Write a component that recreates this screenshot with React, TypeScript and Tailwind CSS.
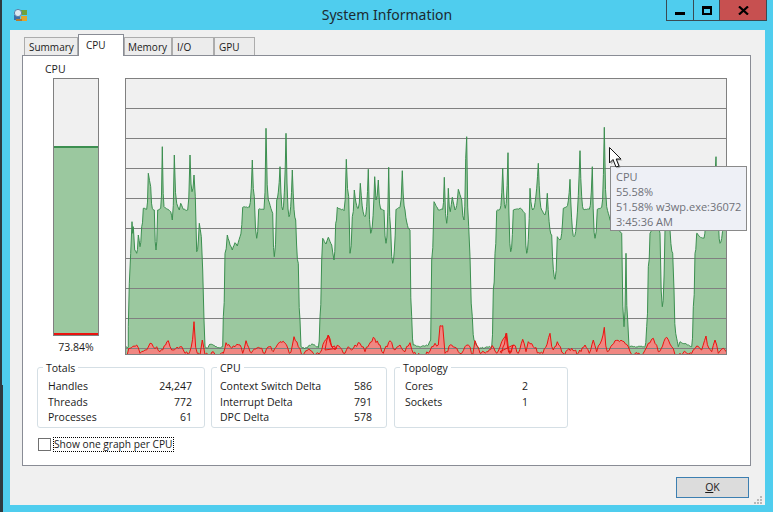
const FONT = "font-['Open_Sans',sans-serif]";

type Raw = number[];
type Pt = [number, number];

// traced from the picture in 3x coordinates, each run has its own x origin
const toPoints = (ox: number, raw: Raw): Pt[] => {
  const out: Pt[] = [];
  for (let i = 0; i < raw.length; i += 2) {
    out.push([ox + raw[i] / 3, 120 + raw[i + 1] / 3]);
  }
  return out;
};

// fill the traced runs back in with samples and a bit of wobble, steep runs get pinched towards the peak
const resample = (pts: Pt[], stepPx: number, amp: number, maxY: number): string => {
  const out: string[] = [];
  let n = 0;
  for (let i = 0; i < pts.length - 1; i++) {
    const [x0, y0] = pts[i];
    const [x1, y1] = pts[i + 1];
    out.push(`${x0.toFixed(1)},${y0.toFixed(1)}`);
    const steps = Math.floor((x1 - x0) / stepPx);
    for (let s = 1; s < steps; s++) {
      n += 1;
      const t = s / steps;
      const wobble = Math.sin(n * 12.9898) * 43758.5453;
      const noise = (wobble - Math.floor(wobble) - 0.5) * 2 * amp;
      const rising = y1 < y0;
      const eased = Math.abs(y1 - y0) > 15 ? (rising ? t ** 2.2 : 1 - (1 - t) ** 2.2) : t;
      const y = Math.min(maxY, y0 + (y1 - y0) * eased + noise);
      out.push(`${(x0 + (x1 - x0) * t).toFixed(1)},${y.toFixed(1)}`);
    }
  }
  const last = pts[pts.length - 1];
  out.push(`${last[0].toFixed(1)},${last[1].toFixed(1)}`);
  return out.join(' ');
};

const greenLine = resample(
  [
    ...toPoints(120, [
      18, 680, 25, 682, 25, 620, 28, 490, 32, 400, 36, 305, 38, 340, 40, 320, 44, 390, 50, 400, 55, 345, 60, 380, 65,
      320, 70, 265, 80, 268, 85, 160, 92, 200, 97, 265, 103, 270, 108, 390, 113, 270, 122, 265, 127, 80, 132, 260, 152,
      275, 157, 300, 163, 105, 170, 250, 178, 270, 182, 250, 190, 268, 203, 270, 210, 105, 216, 215, 222, 165, 226, 230,
      230, 395, 238, 310, 244, 350, 248, 450, 252, 600, 255, 680, 262, 685, 270, 672, 300, 685, 308, 680, 310, 590, 315,
      400, 322, 345, 330, 375, 337, 390, 345, 368, 352, 378, 360, 350, 368, 262, 388, 262, 397, 120, 403, 230, 410, 355,
      416, 268, 432, 268, 438, 25, 445, 240, 458, 280, 463, 410, 470, 240, 480, 140, 488, 270, 498, 40, 507, 290, 517,
      150, 527, 300, 535, 430, 540, 600, 543, 680, 555, 685, 578, 672, 595, 683, 600, 590,
    ]),
    ...toPoints(320, [
      5, 420, 8, 355, 18, 372, 25, 352, 35, 375, 42, 420, 47, 310, 52, 262, 72, 272, 79, 118, 86, 230, 90, 400, 97, 290,
      103, 210, 115, 265, 121, 190, 135, 290, 145, 148, 152, 340, 164, 170, 168, 240, 175, 180, 182, 268, 192, 270, 198,
      370, 206, 142, 212, 330, 218, 430, 228, 268, 240, 262, 247, 152, 255, 270, 270, 330, 275, 590, 280, 675, 300, 680,
      325, 675, 332, 660, 335, 420, 342, 245, 355, 270, 368, 268, 373, 172, 380, 310, 385, 205, 391, 275, 397, 232, 405,
      270, 415, 208, 425, 240, 432, 300, 437, 115, 440, 50, 446, 320, 450, 410, 457, 590, 462, 660, 475, 685, 515, 680,
      520, 510, 525, 400, 530, 272,
    ]),
    ...toPoints(500, [
      0, 268, 8, 145, 16, 265, 24, 98, 32, 395, 40, 270, 62, 265, 75, 280, 80, 400, 90, 205, 98, 270, 115, 130, 125,
      270, 135, 285, 142, 220, 155, 345, 165, 478, 172, 350, 180, 360, 190, 265, 200, 260, 210, 178, 222, 350, 240, 92,
      250, 268, 268, 268, 277, 140, 285, 355, 292, 268, 305, 262, 313, 22, 320, 260, 330, 300, 365, 340, 372, 620, 378,
      400, 383, 600, 387, 680, 435, 680, 440, 620, 445, 440, 450, 340, 470, 300, 480, 340, 487, 560, 495, 330, 510, 330,
      518, 400, 522, 510, 527, 640, 535, 680, 540, 665, 575, 680, 580, 560, 585, 400, 590, 340, 600, 350, 612, 355, 620,
      200, 635, 240, 648, 110, 655, 300, 660, 370, 670, 300, 680, 135,
    ]),
  ],
  0.8,
  0.6,
  354,
);

const redLine = resample(
  [
    ...toPoints(120, [
      18, 705, 30, 685, 50, 675, 60, 700, 75, 690, 90, 670, 100, 680, 110, 680, 120, 695, 145, 662, 155, 690, 175, 685,
      185, 680, 195, 700, 205, 704, 222, 605, 232, 700, 240, 705, 247, 660, 255, 705, 280, 695, 290, 705, 310, 700, 318,
      668, 335, 685, 345, 680, 360, 675, 368, 700, 378, 662, 390, 695, 420, 685, 435, 700, 448, 680, 460, 695, 480, 665,
      495, 670, 508, 700, 522, 650, 535, 680, 545, 705, 570, 690, 585, 705, 605, 690, 613, 665, 625, 645, 635, 680, 650,
      685,
    ]),
    ...toPoints(320, [
      15, 690, 25, 645, 35, 680, 60, 682, 75, 700, 85, 680, 95, 690, 105, 675, 120, 670, 135, 695, 160, 652, 180, 675,
      190, 700, 210, 662, 225, 690, 240, 675, 255, 695, 270, 668, 280, 700, 300, 705, 325, 700, 335, 680, 345, 670, 355,
      675, 360, 617, 368, 617, 375, 700, 395, 675, 410, 685, 425, 700, 440, 675, 450, 680, 458, 705, 465, 662, 480, 700,
      500, 695, 520, 680, 530, 700, 545, 665, 560, 640, 570, 700, 580, 675,
    ]),
    ...toPoints(500, [
      0, 695, 18, 640, 30, 700, 42, 675, 55, 700, 68, 658, 78, 695, 85, 665, 100, 680, 120, 700, 150, 640, 160, 690, 172,
      665, 190, 700, 215, 685, 235, 700, 255, 675, 268, 700, 280, 660, 290, 695, 305, 660, 313, 622, 322, 695, 332, 680,
      345, 662, 372, 665, 385, 680, 395, 704, 430, 700, 445, 670, 460, 655, 475, 695, 500, 652, 515, 680, 525, 704, 540,
      700, 575, 700, 590, 678, 605, 690, 618, 648, 635, 695, 645, 660, 655, 700, 670, 685, 678, 695,
    ]),
  ],
  1.3,
  2.2,
  355,
);

const gridRows = [108, 138, 168, 198, 228, 258, 288, 318, 348];

const CpuGraph = () => (
  <svg className="block h-[277px] w-[602px] shrink-0 bg-[#f0f0f0]" viewBox="125 78 602 277">
    <polygon points={`126,354 ${greenLine} 726,354`} fill="#9bc89f" stroke="none" />
    <polygon points={`126,355 ${redLine} 726,355`} fill="#f08782" stroke="none" />
    {gridRows.map((y) => (
      <line key={y} x1="125" x2="727" y1={y + 0.5} y2={y + 0.5} stroke="#808080" strokeWidth="1" />
    ))}
    <polyline points={greenLine} fill="none" stroke="#3c8f50" strokeWidth="1" />
    <polyline points={redLine} fill="none" stroke="#ea1410" strokeWidth="1" />
    <rect x="125.5" y="78.5" width="601" height="276" fill="none" stroke="#808080" />
  </svg>
);

const tabs = [
  { name: 'Summary', width: 'w-[54px]', pad: 'pl-[4px]' },
  { name: 'CPU', width: 'w-[46px]', pad: 'pl-[7px]' },
  { name: 'Memory', width: 'w-[48px]', pad: 'pl-[3px]' },
  { name: 'I/O', width: 'w-[42px]', pad: 'pl-[4px]' },
  { name: 'GPU', width: 'w-[41px]', pad: 'pl-[4px]' },
];

const Group = ({
  title,
  rows,
  className,
}: {
  title: string;
  rows: [string, string][];
  className: string;
}) => (
  <div className={`relative h-[61px] shrink-0 rounded-[3px] border border-[#d5dfe5] pt-[11px] ${className}`}>
    <span className="absolute -top-[8px] left-[5px] bg-white px-[3px] leading-[16px]">{title}</span>
    {rows.map(([label, value]) => (
      <div key={label} className="flex h-[15.5px] items-center justify-between leading-[15px]">
        <span>{label}</span>
        <span>{value}</span>
      </div>
    ))}
  </div>
);

export default function App() {
  return (
    <div className={`${FONT} relative flex h-[512px] w-[773px] flex-col overflow-hidden border-l-2 border-[#2e3a40] bg-[#4fcdee] text-[10.5px] text-[#1a1a1a]`}>
      <span className="absolute top-[385px] left-0 h-[127px] w-px bg-[#2e3a40]" />
      <div className="flex h-[30px] shrink-0 items-start pr-[6px] pl-[11px]">
        <svg className="mt-[8px] h-[14px] w-[15px] shrink-0" viewBox="0 0 15 14">
          <rect x="1" y="7" width="6" height="5" fill="#3d6ea8" />
          <rect x="8" y="2" width="6" height="5" fill="#6fa23c" />
          <rect x="8" y="8" width="6" height="5" fill="#e0a52c" />
          <circle cx="5" cy="5" r="3.6" fill="#dfe8f2" stroke="#5d7fa6" />
          <rect x="3" y="11" width="6" height="2" fill="#b9782a" />
        </svg>
        <div className="mt-[5px] flex-1 pl-[80px] text-center font-['Noto_Sans',sans-serif] text-[14px] leading-[20px] text-[#1c2a30]">
          System Information
        </div>
        <div className="flex h-[21px] w-[101px] shrink-0 border border-t-0 border-[#3a4a52]">
          <div className="flex w-[27px] items-end justify-center border-r border-[#3a4a52] pb-[5px]">
            <span className="block h-[3px] w-[10px] bg-black" />
          </div>
          <div className="flex w-[26px] items-center justify-center border-r border-[#3a4a52]">
            <span className="block h-[9px] w-[10px] border-2 border-t-[3px] border-black" />
          </div>
          <div className="flex flex-1 items-center justify-center bg-[#c75050]">
            <svg className="h-[9px] w-[11px]" viewBox="0 0 11 9">
              <path d="M1 0.5 L10 8.5 M10 0.5 L1 8.5" stroke="#000" strokeWidth="2.2" />
            </svg>
          </div>
        </div>
      </div>

      <div className="relative ml-[8px] flex h-[475px] w-[755px] shrink-0 flex-col bg-[#f0f0f0] pt-[5px] pl-[12px]">
        <div className="relative z-10 flex h-[20px] items-end pl-[2px] text-[10px]">
          {tabs.map((tab) =>
            tab.name === 'CPU' ? (
              <div
                key={tab.name}
                className={`${tab.width} ${tab.pad} relative -mb-px h-[22px] border border-b-0 border-[#898c95] bg-white pt-[3px] leading-[15px]`}
              >
                {tab.name}
              </div>
            ) : (
              <div
                key={tab.name}
                className={`${tab.width} ${tab.pad} h-[18px] border border-b-0 border-[#acacac] bg-[#ececec] pt-[2px] leading-[15px]`}
              >
                {tab.name}
              </div>
            ),
          )}
        </div>

        <div className="h-[411px] w-[729px] border border-[#898c95] bg-white">
          <div className="flex pl-[30px]">
            <div className="w-[46px] shrink-0">
              <div className="-ml-[8px] h-[22px] pt-[6px] leading-[15px]">CPU</div>
              <div className="flex h-[258px] flex-col border border-[#808080] bg-[#f0f0f0]">
                <div className="h-[67px] shrink-0" />
                <div className="h-[2px] shrink-0 bg-[#3c8f50]" />
                <div className="flex-1 bg-[#9bc89f]" />
                <div className="h-[2px] shrink-0 bg-[#ea1410]" />
              </div>
              <div className="pt-[4px] text-center leading-[15px]">73.84%</div>
            </div>
            <div className="ml-[26px] pt-[22px]">
              <CpuGraph />
            </div>
          </div>

          <div className="mt-[12px] flex pl-[14px]">
            <Group
              title="Totals"
              className="w-[168px] pr-[12px] pl-[10px]"
              rows={[
                ['Handles', '24,247'],
                ['Threads', '772'],
                ['Processes', '61'],
              ]}
            />
            <Group
              title="CPU"
              className="ml-[6px] w-[176px] pr-[14px] pl-[8px]"
              rows={[
                ['Context Switch Delta', '586'],
                ['Interrupt Delta', '791'],
                ['DPC Delta', '578'],
              ]}
            />
            <Group
              title="Topology"
              className="ml-[7px] w-[174px] pr-[39px] pl-[10px]"
              rows={[
                ['Cores', '2'],
                ['Sockets', '1'],
              ]}
            />
          </div>

          <div className="mt-[9px] flex items-center pl-[15px]">
            <span className="h-[13px] w-[13px] shrink-0 border border-[#707070] bg-white" />
            <span className="ml-[2px] border border-dotted border-black pr-px text-[10.2px] leading-[13px]">Show one graph per CPU</span>
          </div>
        </div>

        <div className="mt-[11px] flex justify-end pr-[16px]">
          <div className="flex h-[21px] w-[73px] items-center justify-center border border-[#3c7fb1] bg-[#dcdcdc] leading-[15px]">
            <span>
              <span className="underline">O</span>K
            </span>
          </div>
        </div>
        <svg className="absolute right-[3px] bottom-[1px] h-[8px] w-[8px]" viewBox="0 0 8 8" fill="#b8b8b8">
          <rect x="6" y="0" width="2" height="2" />
          <rect x="3" y="3" width="2" height="2" />
          <rect x="6" y="3" width="2" height="2" />
          <rect x="0" y="6" width="2" height="2" />
          <rect x="3" y="6" width="2" height="2" />
          <rect x="6" y="6" width="2" height="2" />
        </svg>

        {/* hover tooltip and mouse pointer over the graph */}
        <div className="absolute top-[136px] left-[600px] z-20 h-[65px] w-[137px] border border-[#8a8a8a] bg-[#eef0f6] pt-[2px] pl-[5px] text-[11px] leading-[15px] whitespace-nowrap text-[#6e7078]">
          <div>CPU</div>
          <div>55.58%</div>
          <div>51.58% w3wp.exe:36072</div>
          <div>3:45:36 AM</div>
        </div>
        <svg className="absolute top-[117px] left-[599px] z-30 h-[23px] w-[16px]" viewBox="0 0 16 23">
          <path d="M2 2 V17.5 L5.5 14 L8.5 21.5 L11.5 20.5 L8.7 13.5 H13.5 Z" fill="#000" opacity="0.25" />
          <path d="M0.5 0.5 V16 L4 12.5 L7 20 L10 19 L7.2 12 H12 Z" fill="#fff" stroke="#111" strokeWidth="1" />
        </svg>
      </div>
    </div>
  );
}
